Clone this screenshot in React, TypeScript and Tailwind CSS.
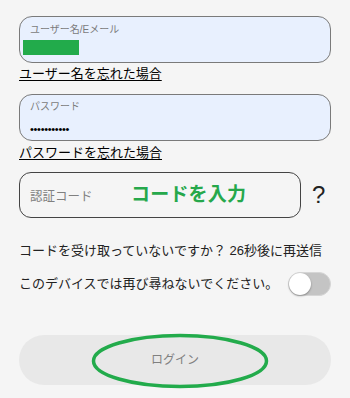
import React from 'react';

const font = { fontFamily: '"Liberation Sans", "Noto Sans CJK JP", sans-serif' };

const App: React.FC = () => {
  return (
    <div className="w-[350px] h-[398px] bg-[#f5f5f5] overflow-hidden" style={font}>
      <div className="px-[19px] pt-4 flex flex-col">
        {/* username */}
        <div className="h-[47px] rounded-[13px] border border-[#7a7a7a] bg-[#e8f0fe] flex flex-col">
          <span className="text-[10px] leading-[12px] text-[#7b7b7b] pl-[10px] pt-[7px]">ユーザー名/Eメール</span>
          <div className="ml-[3px] mt-[4px] w-[56px] h-[15px] bg-[#22ab4b]" />
        </div>
        <a className="mt-[2px] text-[13px] leading-[18px] text-black underline underline-offset-2 w-fit">ユーザー名を忘れた場合</a>

        {/* password */}
        <div className="mt-[11px] h-[47px] rounded-[13px] border border-[#7a7a7a] bg-[#e8f0fe] flex flex-col">
          <span className="text-[10px] leading-[12px] text-[#7b7b7b] pl-[10px] pt-[6px]">パスワード</span>
          <span className="text-[11px] leading-[12px] text-black pl-[10px] pt-[10px] tracking-[-0.3px]">•••••••••••</span>
        </div>
        <a className="mt-[3px] text-[13px] leading-[18px] text-black underline underline-offset-2 w-fit">パスワードを忘れた場合</a>

        {/* code */}
        <div className="mt-[10px] flex items-center">
          <div className="w-[282px] h-[46px] rounded-[12px] border border-[#444] flex items-center">
            <span className="w-[111px] pl-[10px] pt-[4px] text-[12.5px] text-[#808080]">認証コード</span>
            <span className="text-[19px] font-bold text-[#26a84b] tracking-[0.2px]">コードを入力</span>
          </div>
          <span className="ml-[11px] text-[24px] text-[#222] leading-none" style={{ fontFamily: '"Liberation Sans", sans-serif' }}>?</span>
        </div>

        {/* resend */}
        <p className="mt-[24px] text-[13px] leading-[18px] text-[#222]">コードを受け取っていないですか？ 26秒後に再送信</p>

        <div className="mt-[12px] flex items-center justify-between">
          <span className="text-[13px] leading-[18px] text-[#222]">このデバイスでは再び尋ねないでください。</span>
          <div className="w-[43px] h-[24px] rounded-full bg-[#c4c4c4] border border-[#d6d6d6] flex items-center">
            <div className="w-[22px] h-[22px] rounded-full bg-white shadow-[0_1px_2px_rgba(0,0,0,0.35)]" />
          </div>
        </div>

        {/* login */}
        <div className="relative mt-[39px]">
          <button className="w-full h-[50px] rounded-full bg-[#e8e8e8] text-[12px] text-[#808080]">ログイン</button>
          <svg className="absolute left-[72px] top-[-2px]" width="178" height="56" viewBox="0 0 178 56">
            <ellipse cx="89" cy="28" rx="86.5" ry="25.5" fill="none" stroke="#22ab4b" strokeWidth="3.5" />
          </svg>
        </div>
      </div>
    </div>
  );
};

export default App;
